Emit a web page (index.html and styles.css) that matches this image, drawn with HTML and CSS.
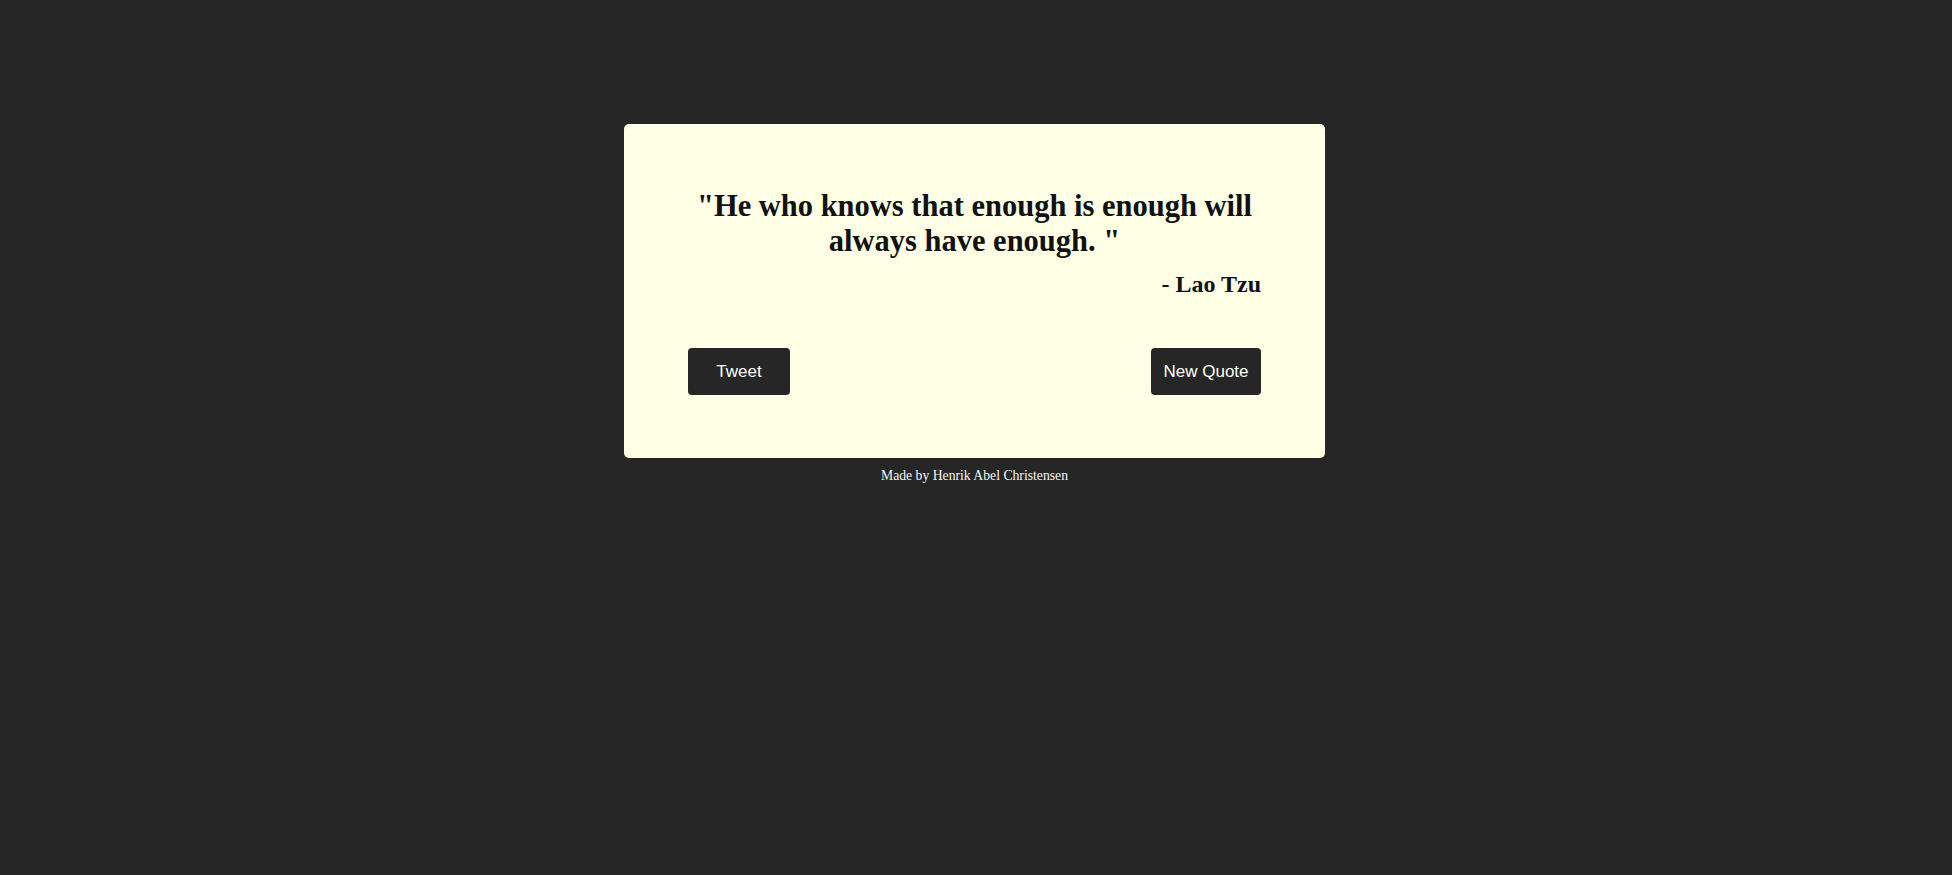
FILE: index.html
```html
<!DOCTYPE html>
<html lang="en">
<head>
<meta charset="utf-8">
<title>Random Quote Machine</title>
<link rel="stylesheet" href="styles.css">
</head>
<body>
  <main class="page">
    <section class="card" id="quote-box">
      <p class="quote-text" id="text">"He who knows that enough is enough will always have enough. "</p>
      <p class="quote-author" id="author">- Lao Tzu</p>
      <div class="actions">
        <a class="btn btn-tweet" id="tweet-quote" href="#">Tweet</a>
        <button class="btn btn-new" id="new-quote" type="button">New Quote</button>
      </div>
    </section>
    <p class="credit">Made by Henrik Abel Christensen</p>
  </main>
</body>
</html>
```
FILE: styles.css
```css
html, body {
  margin: 0;
  padding: 0;
}
body {
  background: #262626;
  font-family: "Liberation Serif", "Times New Roman", serif;
  min-height: 100vh;
}
.page {
  display: flex;
  flex-direction: column;
  align-items: center;
  padding-top: 124px;
  padding-right: 3px;
}
.card {
  box-sizing: border-box;
  width: 701px;
  background: #ffffe6;
  border-radius: 5px;
  padding: 65px 64px 63px;
  display: flex;
  flex-direction: column;
}
.quote-text {
  margin: 0;
  text-align: center;
  font-weight: bold;
  font-size: 30.5px;
  line-height: 35px;
  color: #111;
}
.quote-author {
  margin: 12px 0 0;
  text-align: right;
  font-weight: bold;
  font-size: 24px;
  color: #111;
}
.actions {
  display: flex;
  justify-content: space-between;
  margin-top: 50px;
}
.btn {
  box-sizing: border-box;
  height: 47px;
  display: flex;
  align-items: center;
  justify-content: center;
  background: #262626;
  color: #fff;
  border: none;
  border-radius: 4px;
  font-family: "Liberation Sans", Arial, sans-serif;
  font-size: 17px;
  text-decoration: none;
  cursor: pointer;
}
.btn-tweet {
  width: 102px;
}
.btn-new {
  width: 110px;
}
.credit {
  margin: 9.5px 0 0;
  color: #f5f5f5;
  font-size: 13.7px;
}
```
